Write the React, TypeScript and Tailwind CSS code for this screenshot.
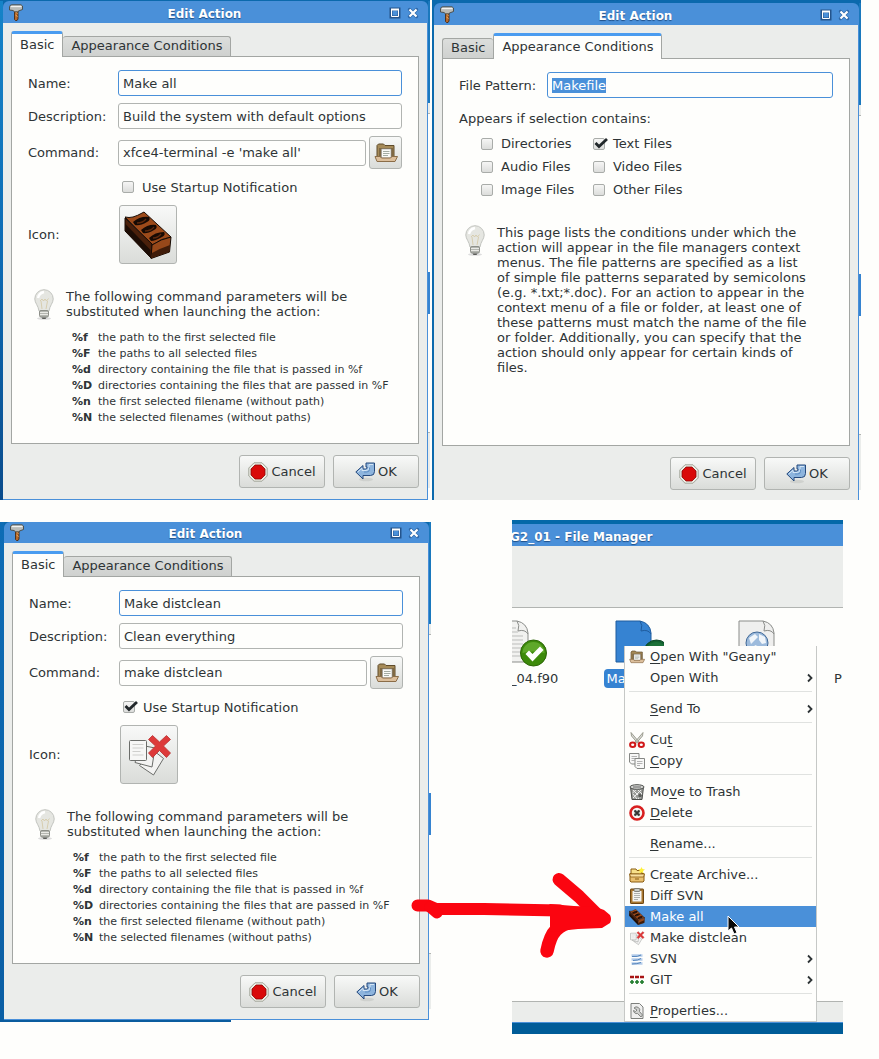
import { useEffect, useId, useRef } from "react";
import type { ReactNode } from "react";
import clsx from "clsx";

/* ---------- icons ---------- */

function HammerIcon() {
  return (
    <svg viewBox="0 0 16 17" className="h-[17px] w-4 shrink-0" aria-hidden="true">
      <path d="M6.500 6h3.500v9l-1 1.500H7.500l-1-1z" fill="#b5682c" stroke="#4a2a12" strokeWidth=".9" />
      <path d="M7.500 8l2 1.500M7.500 11l2 1.500" stroke="#f0b060" strokeWidth="1" />
      <path d="M1.500 2.500Q2 .8 4 .8h9l1.500 1.200v3.500L11 6.800l-1.500 1H6.500L5 6.500 1.500 6z" fill="#b9bbb8" stroke="#454743" strokeWidth=".9" />
      <path d="M3 2.500h10.500" stroke="#f2f2f0" strokeWidth="1.300" />
    </svg>
  );
}

function MaximizeIcon() {
  return (
    <svg viewBox="0 0 12 12" className="size-3" aria-hidden="true">
      <rect x="2" y="2" width="8" height="8" fill="none" stroke="#24548c" strokeWidth="3" />
      <path d="M2.500 2.500h7v7h-7z" fill="none" stroke="#fff" strokeWidth="1" />
      <path d="M2 2.500h8" stroke="#fff" strokeWidth="2" />
    </svg>
  );
}

function CloseIcon() {
  return (
    <svg viewBox="0 0 12 12" className="size-3" aria-hidden="true">
      <path d="M2.500 2.500l7 7M9.500 2.500l-7 7" stroke="#2f69aa" strokeWidth="3.400" strokeLinecap="round" />
      <path d="M2.500 2.500l7 7M9.500 2.500l-7 7" stroke="#fff" strokeWidth="2.200" />
    </svg>
  );
}

function FolderIcon({ className }: { className: string }) {
  return (
    <svg viewBox="0 0 24 20" className={className} aria-hidden="true">
      <path d="M3 16V2.500L4.500 1h5L11 2.500h9V16z" fill="#a58a58" stroke="#5e4a2a" />
      <path d="M5 14V5h14v9z" fill="#7e6844" />
      <path d="M7.500 6h9.500v9H7.500z" fill="#fafaf8" stroke="#999" strokeWidth=".6" />
      <path d="M9 8.500h6.500M9 10.500h6.500M9 12.500h5" stroke="#9aa39a" strokeWidth=".9" />
      <path d="M1 13.500h5l1.500 1.500h9l1.500-1.500h5.500L21 18.500H3z" fill="#dcbf9c" stroke="#8b6d48" />
    </svg>
  );
}

function BrickIcon({ className }: { className: string }) {
  return (
    <svg viewBox="0 0 48 48" className={className} aria-hidden="true">
      <path d="M1 6q4 1 8 0T20 1l27 25q-9 1-19 8z" fill="#9c4a1a" stroke="#1a0d06" />
      <path d="M1 7l27 26-1 14L1 20z" fill="#4a200b" stroke="#140903" />
      <path d="M1.500 13l25 26-.5 7L1.500 20z" fill="#1d0d05" />
      <path d="M28 34q9-6 19-8l-1.500 15L27 47.500z" fill="#96481a" stroke="#140903" />
      <path d="M28 42q9-5 18-8l-.5 7L27 47z" fill="#3f1c09" />
      <path d="M9 11q7-6 16-5 2 3-2 5-7 4-12 3z" fill="#160a04" />
      <path d="M17 19q7-6 15-5 2 3-2 5-7 4-11 3z" fill="#160a04" />
      <path d="M25 27q6-6 15-6 2 3-2 5-7 4-11 4z" fill="#160a04" />
      <path d="M13 12q6 0 9-4M21 20q6 0 9-4M29 27q5 0 8-4" stroke="#5c280d" strokeWidth="1.300" fill="none" />
    </svg>
  );
}

function RemovePagesIcon({ className }: { className: string }) {
  return (
    <svg viewBox="0 0 48 48" className={className} aria-hidden="true">
      <path d="M14.500 34.500l14 9.500 10-16.500-10-8z" fill="#f3f3f2" stroke="#6b6d6a" />
      <path d="M10 31.500l17 4.500 3-19-15-3z" fill="#f3f3f2" stroke="#6b6d6a" />
      <rect x="4.500" y="9.500" width="17" height="20" rx="1" fill="#f7f7f6" stroke="#6b6d6a" />
      <path d="M7.500 13.500h11M7.500 17h11M7.500 20.500h8M7.500 24h11" stroke="#cfcfcd" />
      <path d="M23.500 8.500l4-4L34.500 11l7-6.500 4 4-7 6.500 7 7-4 4.500-7-7-7 7-4-4.500 7-7z" fill="#dd3a3a" stroke="#b83030" strokeWidth=".8" />
    </svg>
  );
}

function BulbIcon() {
  return (
    <svg viewBox="0 0 20 31" className="h-[31px] w-5 shrink-0" aria-hidden="true">
      <ellipse cx="10" cy="29.500" rx="7" ry="1.300" fill="#ddd" />
      <path d="M10 .7a9.200 9.200 0 0 1 9.200 9.300c0 4-3.500 6.500-4.200 12H5C4.300 16.500.8 14 .8 10A9.200 9.200 0 0 1 10 .7z" fill="#e5e6e1" stroke="#c2c4bf" />
      <path d="M4 9q1-5 6-6" stroke="#fff" strokeWidth="2.500" fill="none" />
      <path d="M6 12l2-2 1.500 2L11 10l1.500 2 2-2.500M8 20l-1-8M12 20l1.500-8" stroke="#d3c7a2" strokeWidth=".8" fill="none" />
      <rect x="5.500" y="21.500" width="9" height="6.500" rx="1.500" fill="#b4b6b0" stroke="#8d8f89" />
      <path d="M6 23.500h8M6 25.500h8" stroke="#e9e9e5" />
      <path d="M7.500 28.500h5l-1 1.500h-3z" fill="#5b5c58" />
    </svg>
  );
}

function StopIcon() {
  return (
    <svg viewBox="0 0 20 20" className="size-5 shrink-0" aria-hidden="true">
      <path d="M6 .8h8L19.200 6v8L14 19.200H6L.8 14V6z" fill="#ecede4" stroke="#a3a59a" />
      <path d="M7 3h6l4 4v6l-4 4H7l-4-4V7z" fill="#d90a0a" stroke="#8d0505" strokeWidth=".8" />
    </svg>
  );
}

function ReturnIcon() {
  return (
    <svg viewBox="0 0 20 20" className="size-5 shrink-0" aria-hidden="true">
      <ellipse cx="11" cy="17.500" rx="7" ry="1.800" fill="#cfd1ce" />
      <path d="M.8 10L8 3.500V7h2.500q1.500 0 1.500-1.500V5h-1V1h8.500v8.500q0 4-4 4H8V17z" fill="#8db4dd" stroke="#24487c" strokeLinejoin="round" />
      <path d="M2.800 10L7 6.200V8.500h4Q14 8.500 14 5.500V2.500h4" fill="none" stroke="#d4e5f5" />
      <path d="M14.500 5.500v2q0 2.500-3 2.500H9" fill="none" stroke="#5f8fc4" />
    </svg>
  );
}

function ScissorsIcon() {
  return (
    <svg viewBox="0 0 16 16" className="size-4" aria-hidden="true">
      <path d="M2 .5l8.500 10-1.500 1L2.500 4zM14 .5L5.500 10.500l1.500 1L13.500 4z" fill="#d9dad6" stroke="#8c8b7c" strokeWidth=".8" />
      <ellipse cx="3.700" cy="12.700" rx="2.600" ry="2.200" fill="#fff" stroke="#d01818" strokeWidth="2" />
      <ellipse cx="12.300" cy="12.700" rx="2.600" ry="2.200" fill="#fff" stroke="#d01818" strokeWidth="2" />
    </svg>
  );
}

function CopyIcon() {
  return (
    <svg viewBox="0 0 16 16" className="size-4" aria-hidden="true">
      <path d="M.5.500h9.500v10.500H2.500L.5 9z" fill="#f8f8f7" stroke="#858784" />
      <path d="M2.500 3.500h5.500M2.500 5.500h5.500M2.500 7.500h3" stroke="#aaa" strokeWidth=".9" />
      <path d="M6 5.500h9.500v10H8L6 13.500z" fill="#f8f8f7" stroke="#858784" />
      <path d="M8 8.500h5.500M8 10.500h5.500M8 12.500h3" stroke="#aaa" strokeWidth=".9" />
    </svg>
  );
}

function TrashIcon() {
  return (
    <svg viewBox="0 0 16 16" className="size-4" aria-hidden="true">
      <path d="M1.500 3l1.500 12.500h10L14.500 3z" fill="#9a9c98" stroke="#4c4e4b" />
      <path d="M4 6l8 8M4 10l4 5M8 5l5 5M12 6l-8 8M13 10l-4 5M8 5L3.500 9" stroke="#eee" strokeWidth="1" />
      <ellipse cx="8" cy="3" rx="7" ry="2.300" fill="#d5d6d3" stroke="#4c4e4b" />
      <path d="M4 3h8" stroke="#666" />
      <path d="M9 11l2-1.500 2 1.500-1 2.500h-2z" fill="#5b5d5a" />
    </svg>
  );
}

function DeleteIcon() {
  return (
    <svg viewBox="0 0 16 16" className="size-4" aria-hidden="true">
      <circle cx="8" cy="8" r="6.500" fill="#f6f6f4" stroke="#d81f1f" strokeWidth="2.600" />
      <rect x="5" y="5" width="6" height="6" rx="1" fill="#c4c8c4" />
      <path d="M5.500 5.500l5 5M10.500 5.500l-5 5" stroke="#333" strokeWidth="1.800" />
    </svg>
  );
}

function ArchiveIcon() {
  return (
    <svg viewBox="0 0 16 16" className="size-4" aria-hidden="true">
      <path d="M1 6.500h14V14l-1 1H2l-1-1z" fill="#e9c070" stroke="#8a5c12" />
      <path d="M2 2h5l1 1.500h5V7H2z" fill="#f7e08a" stroke="#8a5c12" />
      <path d="M.5 7h15l-1 3h-13z" fill="#f8dfa0" stroke="#8a5c12" strokeWidth=".8" />
      <path d="M6 12h4" stroke="#8a5c12" />
      <path d="M12.500 0l1 2 2.500.5-2 1.500.5 2.500-2-1.500-2 1.500.5-2.500-2-1.500 2.500-.5z" fill="#fff03a" />
    </svg>
  );
}

function ClipboardIcon() {
  return (
    <svg viewBox="0 0 16 16" className="size-4" aria-hidden="true">
      <rect x="1.500" y="1" width="13" height="14.500" rx=".6" fill="#a9772f" stroke="#6e4612" />
      <path d="M3.500 3h9v10.500h-9z" fill="#f4f4f2" />
      <path d="M5 5.500h6M5 7.500h6M5 9.500h6M5 11.500h4" stroke="#a7a9a6" strokeWidth=".9" />
      <rect x="5" y=".5" width="6" height="3" rx="1" fill="#c9cbc7" stroke="#6b6c68" strokeWidth=".8" />
    </svg>
  );
}

function SvnIcon() {
  return (
    <svg viewBox="0 0 16 16" className="size-4" aria-hidden="true">
      <path d="M2.500 4.500h11M2.500 8.500h11M2.500 12.500h11" stroke="#b5cdea" strokeWidth="2.600" />
      <path d="M3 5.500q6 .5 9-1.500M4 9.500q5 0 8-2M3 13q5 0 9-1.500" stroke="#5384bb" strokeWidth="1" fill="none" />
    </svg>
  );
}

function GitIcon() {
  return (
    <svg viewBox="0 0 16 16" className="size-4" aria-hidden="true">
      <path d="M1 5h4M6 5h4M11 5h4" stroke="#a81414" strokeWidth="2.400" />
      <path d="M1 10h4M3 8v4M6 10h4M8 8v4M11 10h4M13 8v4" stroke="#1d7a28" strokeWidth="1.600" />
    </svg>
  );
}

function PropertiesIcon() {
  return (
    <svg viewBox="0 0 16 16" className="size-4" aria-hidden="true">
      <path d="M2 .5h8.500l3.500 3.500v11.500H2z" fill="#efefee" stroke="#7d7f7c" />
      <path d="M5 5a3.300 3.300 0 0 1 5.500 3.500l3 3.500-1.500 2-3.500-3.500A3.200 3.200 0 0 1 4.500 7.500l2 1 1.500-1.500z" fill="#d0d1cf" stroke="#777976" strokeWidth=".9" />
    </svg>
  );
}

function ChevronIcon() {
  return (
    <svg viewBox="0 0 8 10" className="h-2.5 w-2 shrink-0" aria-hidden="true">
      <path d="M2 1.500L5.500 5 2 8.500" fill="none" stroke="#2e3436" strokeWidth="1.800" />
    </svg>
  );
}

/* ---------- dialog parts ---------- */

function TitleBar({ clipped }: { clipped?: boolean }) {
  return (
    <header
      className={clsx(
        "flex items-end justify-between rounded-t-md bg-[#4a90d9] pr-[9px] pl-[5px]",
        clipped ? "h-[21px]" : "h-[22px]",
      )}
    >
      <div className="flex h-[21px] w-8 items-center">
        <HammerIcon />
      </div>
      <h2 className="h-[21px] text-xs leading-[24px] font-bold text-white [text-shadow:0_1px_1px_#1f4f87]">Edit Action</h2>
      <div className="flex h-[21px] w-[50px] items-center justify-end gap-[6px]">
        <button type="button" aria-label="Maximize"><MaximizeIcon /></button>
        <button type="button" aria-label="Close"><CloseIcon /></button>
      </div>
    </header>
  );
}

function Tab({ active, children }: { active: boolean; children: ReactNode }) {
  return (
    <button
      type="button"
      role="tab"
      aria-selected={active}
      className={clsx(
        "rounded-t-[3px] border-x border-[#a3a6a3] px-2 pb-[2px] whitespace-nowrap",
        active
          ? "z-10 -mb-px h-[26px] border-t-[3px] border-t-[#4a9cf0] bg-[#fefefc]"
          : "h-5 border-t bg-linear-to-b from-[#dcdedc] to-[#cfd1cf] first:border-r-0 last:border-l-0",
      )}
    >
      {children}
    </button>
  );
}

function PushButton({ icon, children }: { icon: ReactNode; children: ReactNode }) {
  return (
    <button
      type="button"
      className="flex h-[33px] w-[86px] items-center justify-center gap-[3px] rounded-[3px] border border-[#b1b4b1] bg-linear-to-b from-[#f8f9f8] to-[#dadcd9]"
    >
      {icon}
      {children}
    </button>
  );
}

function TickBox({ label, checked }: { label: string; checked?: boolean }) {
  return (
    <label className="flex items-center gap-2 whitespace-nowrap">
      <span className="relative flex size-3">
        <input
          type="checkbox"
          defaultChecked={checked}
          className="peer size-3 appearance-none rounded-[2px] border border-[#a9aca9] bg-linear-to-b from-[#f6f6f5] to-[#dcdddb]"
        />
        <svg
          viewBox="0 0 16 14"
          className="pointer-events-none absolute -top-px left-0 hidden h-[14px] w-4 peer-checked:block"
          aria-hidden="true"
        >
          <path d="M2.500 6L6 9.500 14 2" fill="none" stroke="#22282b" strokeWidth="2.800" />
        </svg>
      </span>
      {label}
    </label>
  );
}

const fieldClass =
  "h-[26px] w-full min-w-0 rounded-[3px] border bg-[#fefefc] px-1 outline-none selection:bg-[#4a90d9] selection:text-white";

function Dialog({ tab, clipped, children }: { tab: "basic" | "conditions"; clipped?: boolean; children: ReactNode }) {
  return (
    <section className="flex min-w-0 flex-1 flex-col">
      <TitleBar clipped={clipped} />
      <div
        className={clsx(
          "flex flex-1 flex-col border-r border-[#4a90d9] bg-[#ebedeb] px-2 pt-2",
          tab === "basic" ? "border-b pb-[11px]" : "pb-[10px]",
        )}
      >
        <div role="tablist" className="flex h-[25px] items-end">
          <Tab active={tab === "basic"}>Basic</Tab>
          <Tab active={tab === "conditions"}>Appearance Conditions</Tab>
        </div>
        <div className="flex-1 border border-[#a3a6a3] bg-[#fefefc] px-4 pt-[13px] pb-[17px]">{children}</div>
        <div className="mt-[11px] flex justify-end gap-2">
          <PushButton icon={<StopIcon />}>Cancel</PushButton>
          <PushButton icon={<ReturnIcon />}>OK</PushButton>
        </div>
      </div>
    </section>
  );
}

const parameters = [
  ["%f", "the path to the first selected file"],
  ["%F", "the paths to all selected files"],
  ["%d", "directory containing the file that is passed in %f"],
  ["%D", "directories containing the files that are passed in %F"],
  ["%n", "the first selected filename (without path)"],
  ["%N", "the selected filenames (without paths)"],
];

interface BasicProps {
  name: string;
  description: string;
  command: string;
  notify?: boolean;
  icon: ReactNode;
}

function BasicPage({ name, description, command, notify, icon }: BasicProps) {
  const id = useId();
  return (
    <>
      <div className="grid grid-cols-[90px_1fr] items-center gap-y-[7px]">
        <label htmlFor={id + "name"}>Name:</label>
        <input id={id + "name"} className={clsx(fieldClass, "border-[#4a90d9]")} defaultValue={name} />
        <label htmlFor={id + "description"}>Description:</label>
        <input id={id + "description"} className={clsx(fieldClass, "border-[#b1b4b1]")} defaultValue={description} />
        <label htmlFor={id + "command"}>Command:</label>
        <div className="flex items-center gap-[3px]">
          <input id={id + "command"} className={clsx(fieldClass, "border-[#b1b4b1]")} defaultValue={command} />
          <button
            type="button"
            aria-label="Browse"
            className="flex h-[33px] w-[33px] shrink-0 items-center justify-center rounded-[3px] border border-[#b1b4b1] bg-linear-to-b from-[#f8f9f8] to-[#dadcd9]"
          >
            <FolderIcon className="h-5 w-6" />
          </button>
        </div>
        <div className="col-start-2 flex h-[22px] items-center pl-1">
          <TickBox label="Use Startup Notification" checked={notify} />
        </div>
        <span>Icon:</span>
        <button
          type="button"
          aria-label="Choose icon"
          className="ml-px flex h-[59px] w-[58px] items-center justify-center rounded-[3px] border border-[#b1b4b1] bg-linear-to-b from-[#f8f9f8] to-[#dadcd9]"
        >
          {icon}
        </button>
      </div>
      <div className="mt-[25px] flex gap-3 pl-[6px]">
        <BulbIcon />
        <p className="max-w-[300px]">The following command parameters will be substituted when launching the action:</p>
      </div>
      <dl className="mt-[10px] grid grid-cols-[26px_1fr] pl-11 text-[11px] leading-4 whitespace-nowrap">
        {parameters.map(([key, text]) => (
          <div key={key} className="contents">
            <dt className="font-bold">{key}</dt>
            <dd>{text}</dd>
          </div>
        ))}
      </dl>
    </>
  );
}

function ConditionsPage() {
  const id = useId();
  const pattern = useRef<HTMLInputElement>(null);
  useEffect(() => {
    pattern.current?.focus({ preventScroll: true });
    pattern.current?.select();
  }, []);
  return (
    <>
      <div className="grid grid-cols-[88px_1fr] items-center">
        <label htmlFor={id}>File Pattern:</label>
        <input id={id} ref={pattern} className={clsx(fieldClass, "border-[#4a90d9]")} defaultValue="Makefile" />
      </div>
      <fieldset className="mt-[13px]">
        <legend>Appears if selection contains:</legend>
        <div className="mt-[6px] grid auto-rows-[23px] grid-cols-[112px_1fr] items-center pl-[22px]">
          <TickBox label="Directories" />
          <TickBox label="Text Files" checked />
          <TickBox label="Audio Files" />
          <TickBox label="Video Files" />
          <TickBox label="Image Files" />
          <TickBox label="Other Files" />
        </div>
      </fieldset>
      <div className="mt-6 flex gap-3 pl-[6px]">
        <BulbIcon />
        <p className="max-w-[316px]">
          This page lists the conditions under which the action will appear in the file managers context menus. The
          file patterns are specified as a list of simple file patterns separated by semicolons (e.g. *.txt;*.doc). For
          an action to appear in the context menu of a file or folder, at least one of these patterns must match the
          name of the file or folder. Additionally, you can specify that the action should only appear for certain
          kinds of files.
        </p>
      </div>
    </>
  );
}

/* Sliver of the desktop and of the window that lies behind a dialog. */
function BackdropEdge() {
  return (
    <div className="flex w-[2px] shrink-0 flex-col bg-[#fefefc]">
      <div className="h-[102px] bg-[#1a78bd]" />
      <div className="h-[10px] bg-[#ebedeb]" />
      <div className="h-px bg-[#b1b4b1]" />
      <div className="h-[158px]" />
      <div className="h-[42px] bg-[#3583d0]" />
      <div className="h-[118px]" />
      <div className="h-px bg-[#b1b4b1]" />
      <div className="h-[55px] bg-[#ebedeb]" />
    </div>
  );
}

/* ---------- file manager ---------- */

function PageShape({ fill, stroke }: { fill: string; stroke: string }) {
  return (
    <>
      <path d="M1 1h24q10 2 11 12v29H1z" fill={fill} stroke={stroke} />
      <path d="M25 1q3 4 1 10 7-2 10 3" fill="none" stroke={stroke} />
    </>
  );
}

function CheckEmblem({ cx, cy, dark }: { cx: number; cy: number; dark?: boolean }) {
  return (
    <g transform={`translate(${cx} ${cy})`}>
      <circle r="13" fill={dark ? "#12602f" : "#3d8a0b"} stroke={dark ? "#0c4526" : "#2c6606"} />
      <path d="M-11 0A11 11 0 0 1 11 0Q0-3-11 0z" fill={dark ? "#1c7038" : "#5fa82a"} />
      <path d="M-8 1l3.500-3.500L-1 1l7.500-7.500L10-3-1 8.500z" fill={dark ? "#3f79ad" : "#fff"} />
    </g>
  );
}

function FileGrid() {
  return (
    <div className="flex min-h-[393px] flex-1 overflow-hidden pt-[12px] whitespace-nowrap">
      <div className="w-[60px] shrink-0">
        <svg viewBox="20 0 60 47" className="h-[47px] w-[60px]" aria-hidden="true">
          <PageShape fill="#f2f2f0" stroke="#8b8d8a" />
          <path d="M5 8h19M5 12h21M5 16h26M5 20h26M5 24h26M5 28h26M5 32h26M5 36h26" stroke="#bcbdbb" />
          <CheckEmblem cx={41.500} cy={33} />
        </svg>
        <p className="-ml-[2px] pt-[4px]">_04.f90</p>
      </div>
      <div className="flex w-[123px] shrink-0 flex-col items-center">
        <svg viewBox="-11 0 60 47" className="h-[47px] w-[60px]" aria-hidden="true">
          <PageShape fill="#3683d2" stroke="#1f5c9e" />
          <CheckEmblem cx={41.500} cy={33} dark />
        </svg>
        <p className="mt-[2px] rounded-[4px] bg-[#3683d2] px-[2px] pt-[2px] pb-[2px] text-white">Makefile</p>
      </div>
      <div className="flex w-[123px] shrink-0 flex-col items-center">
        <svg viewBox="-11 0 60 47" className="h-[47px] w-[60px]" aria-hidden="true">
          <PageShape fill="#efefee" stroke="#8b8d8a" />
          <circle cx="19" cy="23" r="11" fill="#9dbbdc" stroke="#3f6796" />
          <path d="M11 18l6-4 3 3-4 4-3 3zM21 14l6 3 1 6-4 1-3-4zM17 25l5 2-3 6-4-4z" fill="#f0f5fa" />
        </svg>
      </div>
      <p className="pt-[51px] pl-4">P</p>
    </div>
  );
}

interface MenuEntry {
  icon?: ReactNode;
  label: ReactNode;
  submenu?: boolean;
  selected?: boolean;
}

const menuGroups: MenuEntry[][] = [
  [
    { icon: <FolderIcon className="size-4" />, label: <><u>O</u>pen With "Geany"</> },
    { label: "Open With", submenu: true },
  ],
  [{ label: <><u>S</u>end To</>, submenu: true }],
  [
    { icon: <ScissorsIcon />, label: <>Cu<u>t</u></> },
    { icon: <CopyIcon />, label: <><u>C</u>opy</> },
  ],
  [
    { icon: <TrashIcon />, label: <>Mo<u>v</u>e to Trash</> },
    { icon: <DeleteIcon />, label: <><u>D</u>elete</> },
  ],
  [{ label: <><u>R</u>ename...</> }],
  [
    { icon: <ArchiveIcon />, label: <>Cr<u>e</u>ate Archive...</> },
    { icon: <ClipboardIcon />, label: "Diff SVN" },
    { icon: <BrickIcon className="size-4" />, label: "Make all", selected: true },
    { icon: <RemovePagesIcon className="size-4" />, label: "Make distclean" },
    { icon: <SvnIcon />, label: "SVN", submenu: true },
    { icon: <GitIcon />, label: "GIT", submenu: true },
  ],
  [{ icon: <PropertiesIcon />, label: <><u>P</u>roperties...</> }],
];

function ContextMenu() {
  return (
    <div
      role="menu"
      className="absolute top-[126px] left-[112px] w-[193px] border-x border-b border-[#c6c8c6] bg-[#fefefc]"
    >
      {menuGroups.map((group, index) => (
        <div key={index}>
          {index > 0 && (
            <div className="h-[10px] px-1 pt-[3px]">
              <div className="h-px bg-[#e0e2e0]" />
            </div>
          )}
          {group.map((entry, row) => (
            <button
              key={row}
              type="button"
              role="menuitem"
              className={clsx(
                "flex h-[21px] w-full items-center gap-[5px] pr-[2px] pl-1 text-left underline-offset-2",
                entry.selected && "bg-[#4a90d9] text-white",
              )}
            >
              <span className="flex size-4 shrink-0">{entry.icon}</span>
              <span className="flex-1">{entry.label}</span>
              {entry.submenu && <ChevronIcon />}
            </button>
          ))}
        </div>
      ))}
      <svg viewBox="0 0 14 20" className="absolute top-[269px] left-[102px] h-5 w-[14px]" aria-hidden="true">
        <path d="M1 1v15l3.500-3 2.500 6 3-1.300-2.500-5.700H12z" fill="#0a0a0a" stroke="#fff" />
      </svg>
    </div>
  );
}

function FileManager() {
  return (
    <section className="relative flex min-w-0 flex-col">
      <div className="h-1 bg-[#0468a8]" />
      <header className="h-[22px] overflow-hidden bg-[#4a90d9]">
        <h2 className="-ml-[2px] text-xs leading-[26px] font-bold whitespace-nowrap text-white [text-shadow:0_1px_1px_#1f4f87]">
          G2_01 - File Manager
        </h2>
      </header>
      <div className="h-[62px] border-b border-[#b1b4b1] bg-[#ebedeb]" />
      <FileGrid />
      <div className="h-[21px] border-t border-[#b1b4b1] bg-[#ebedeb]" />
      <div className="h-3 border-t border-[#4a90d9] bg-[#005c98]" />
      <ContextMenu />
    </section>
  );
}

function PointerArrow() {
  return (
    <svg
      viewBox="0 0 204 92"
      className="pointer-events-none absolute top-[350px] left-[410px] h-[92px] w-[204px]"
      aria-hidden="true"
    >
      <g fill="none" stroke="#fb0510" strokeLinecap="round" strokeLinejoin="round">
        <path d="M7.500 35.500H18l8 3.500h48l76 1.500" strokeWidth="12" />
        <path d="M20 37l7 6" strokeWidth="11" />
        <path d="M149 9.500l20 17 16 16" strokeWidth="13" />
        <path d="M137 81q3-15 9-21t18-9" strokeWidth="13.500" />
      </g>
      <path d="M140 34l24 2 22 1 8 3 6 5q2 4 0 8l-8 5-24 1-28 3V46l-12-2z" fill="#fb0510" />
    </svg>
  );
}

/* ---------- page ---------- */

export default function App() {
  return (
    <main className="min-h-screen bg-[#fefefc] pb-[25px] font-['DejaVu_Sans',sans-serif] text-[13px] leading-[15px] text-[#2e3436]">
      <div className="grid grid-cols-[430fr_429fr] gap-[2px] pr-[18px]">
        <div className="flex bg-[#0b69ad] pt-px">
          <div className="w-[3px] shrink-0 bg-linear-to-b from-[#1583c8] via-[#0d6cb5] to-[#0a4c8c]" />
          <Dialog tab="basic">
            <BasicPage
              name="Make all"
              description="Build the system with default options"
              command="xfce4-terminal -e 'make all'"
              icon={<BrickIcon className="size-12" />}
            />
          </Dialog>
          <BackdropEdge />
        </div>
        <div className="flex bg-[#0b69ad] pt-[3px]">
          <div className="w-[2px] shrink-0 bg-[#0b69ad]" />
          <Dialog tab="conditions">
            <ConditionsPage />
          </Dialog>
          <BackdropEdge />
        </div>
      </div>
      <div className="relative mt-5 grid grid-cols-[431fr_331fr] gap-[81px] pr-9">
        <div className="mt-[2px] self-start">
          <div className="flex bg-[#0b69ad]">
            <div className="w-1 shrink-0 bg-linear-to-b from-[#0d6cb5] to-[#0a5ea4]" />
            <Dialog tab="basic" clipped>
              <BasicPage
                name="Make distclean"
                description="Clean everything"
                command="make distclean"
                notify
                icon={<RemovePagesIcon className="size-12" />}
              />
            </Dialog>
            <BackdropEdge />
          </div>
          <div className="h-[2px] w-[231px] bg-[#0b5c9e]" />
        </div>
        <FileManager />
        <PointerArrow />
      </div>
    </main>
  );
}
